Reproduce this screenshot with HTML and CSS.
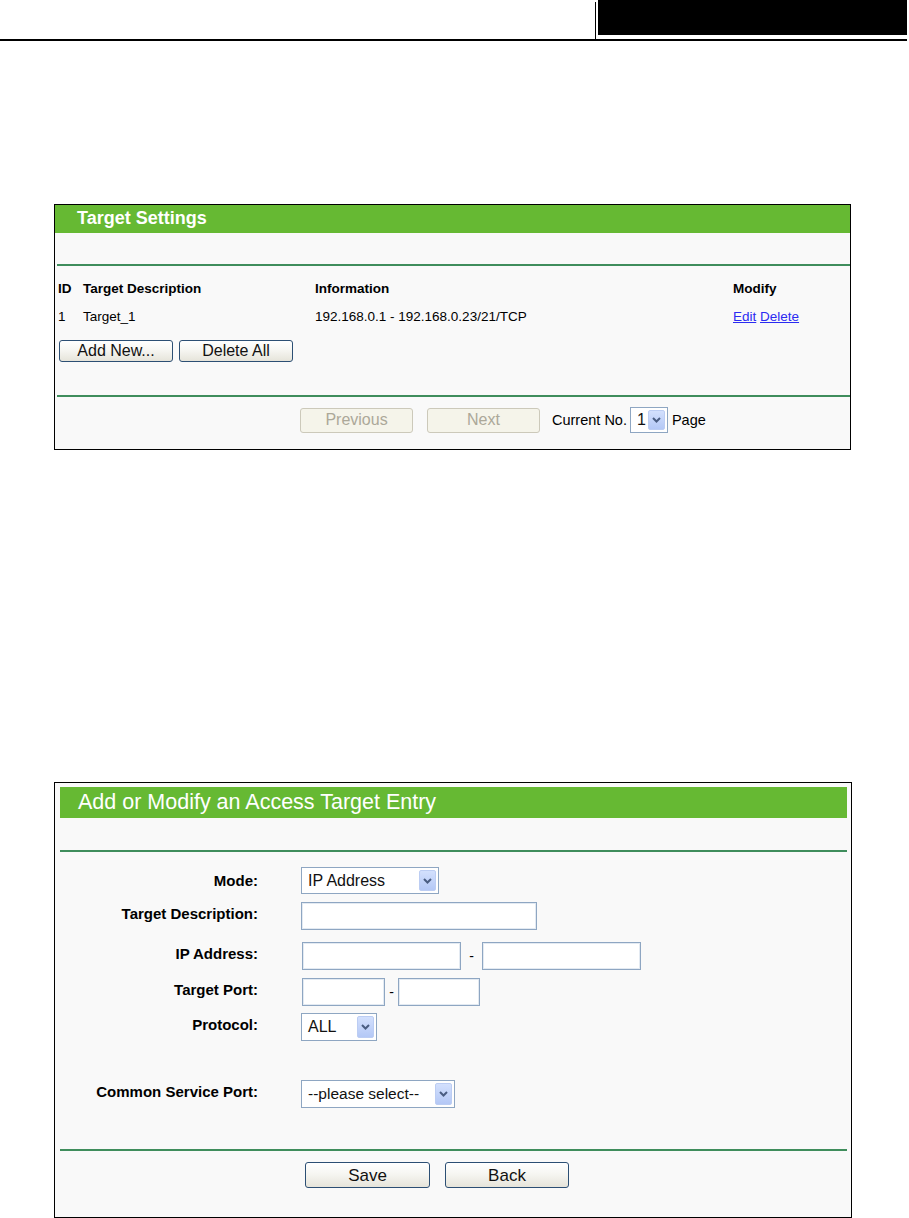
FILE: index.html
```html
<!DOCTYPE html>
<html>
<head>
<meta charset="utf-8">
<title>Access Target</title>
<link rel="stylesheet" href="styles.css">
</head>
<body>
<header class="doc-head">
  <div class="doc-head-fill"></div>
  <div class="doc-head-tab"><div class="doc-head-box"></div></div>
</header>
<div class="doc-rule"></div>

<section class="panel panel-list">
  <div class="panel-title title-bold">Target Settings</div>
  <div class="green-line line-top"></div>
  <div class="list">
    <div class="cell th">ID</div>
    <div class="cell th">Target Description</div>
    <div class="cell th">Information</div>
    <div class="cell th">Modify</div>
    <div class="cell">1</div>
    <div class="cell">Target_1</div>
    <div class="cell">192.168.0.1 - 192.168.0.23/21/TCP</div>
    <div class="cell"><a href="#" class="lnk">Edit</a> <a href="#" class="lnk">Delete</a></div>
  </div>
  <div class="list-actions">
    <button class="btn btn-sm">Add New...</button>
    <button class="btn btn-sm">Delete All</button>
  </div>
  <div class="green-line line-mid"></div>
  <div class="pager">
    <button class="btn btn-off" disabled>Previous</button>
    <button class="btn btn-off" disabled>Next</button>
    <span class="pager-text">Current No.</span>
    <span class="sel sel-page"><span class="sel-val">1</span><span class="sel-arrow"><svg width="9" height="6" viewBox="0 0 9 6"><polyline points="1,1 4.5,4.5 8,1" fill="none" stroke="#4a5d82" stroke-width="2"/></svg></span></span>
    <span class="pager-text">Page</span>
  </div>
</section>

<section class="panel panel-form">
  <div class="panel-title title-form">Add or Modify an Access Target Entry</div>
  <div class="green-line line-form-top"></div>

  <div class="frow r1">
    <label class="flabel">Mode:</label>
    <span class="sel sel-mode"><span class="sel-val">IP Address</span><span class="sel-arrow"><svg width="9" height="6" viewBox="0 0 9 6"><polyline points="1,1 4.5,4.5 8,1" fill="none" stroke="#4a5d82" stroke-width="2"/></svg></span></span>
  </div>
  <div class="frow r2">
    <label class="flabel">Target Description:</label>
    <span class="inp inp-desc"></span>
  </div>
  <div class="frow r3">
    <label class="flabel">IP Address:</label>
    <span class="inp inp-ip inp-first"></span><span class="dash dash-ip">-</span><span class="inp inp-ip"></span>
  </div>
  <div class="frow r4">
    <label class="flabel">Target Port:</label>
    <span class="inp inp-port inp-first"></span><span class="dash dash-port">-</span><span class="inp inp-port2"></span>
  </div>
  <div class="frow r5">
    <label class="flabel">Protocol:</label>
    <span class="sel sel-proto"><span class="sel-val">ALL</span><span class="sel-arrow"><svg width="9" height="6" viewBox="0 0 9 6"><polyline points="1,1 4.5,4.5 8,1" fill="none" stroke="#4a5d82" stroke-width="2"/></svg></span></span>
  </div>
  <div class="frow r6">
    <label class="flabel">Common Service Port:</label>
    <span class="sel sel-csp"><span class="sel-val">--please select--</span><span class="sel-arrow"><svg width="9" height="6" viewBox="0 0 9 6"><polyline points="1,1 4.5,4.5 8,1" fill="none" stroke="#4a5d82" stroke-width="2"/></svg></span></span>
  </div>

  <div class="green-line line-form-bot"></div>
  <div class="form-actions">
    <button class="btn btn-lg">Save</button>
    <button class="btn btn-lg btn-back">Back</button>
  </div>
</section>
</body>
</html>
```

FILE: styles.css
```css
* { box-sizing: border-box; }
html, body { margin: 0; padding: 0; background: #ffffff; }
body {
  width: 909px;
  font-family: "Liberation Sans", Arial, sans-serif;
  color: #000;
}

/* document header */
.doc-head {
  display: flex;
  height: 39px;
}
.doc-head-fill { flex: 1; }
.doc-head-tab {
  width: 312px;
  margin-right: 2px;
  padding-left: 2px;
  border-left: 1px solid #000;
  margin-top: 2px;
}
.doc-head-box {
  background: #000;
  height: 35px;
  margin-top: -2px;
}
.doc-rule {
  height: 2px;
  background: #000;
  margin-right: 2px;
}

/* panels */
.panel {
  margin-left: 54px;
  border: 1px solid #000;
  background: #f9f9f9;
}
.panel-list {
  width: 797px;
  margin-top: 163px;
}
.panel-form {
  width: 798px;
  margin-top: 332px;
  padding: 4px 4px 0 5px;
  height: 436px;
}
.panel-title {
  background: #66b933;
  color: #fff;
}
.title-bold {
  height: 28px;
  font-size: 18px;
  font-weight: bold;
  line-height: 27px;
  padding-left: 22px;
}
.title-form {
  height: 31px;
  font-size: 21.5px;
  line-height: 30px;
  padding-left: 18px;
}
.green-line {
  height: 2px;
  background: #3f8d5c;
}
.line-top { margin: 31px 0 0 2px; }
.line-mid { margin: 33px 0 0 2px; }
.line-form-top { margin-top: 32px; }
.line-form-bot { margin-top: 9px; }

/* list */
.list {
  display: grid;
  grid-template-columns: 25px 232px 418px 1fr;
  grid-auto-rows: 28px;
  align-items: center;
  padding-left: 3px;
  margin-top: 8px;
  font-size: 13.5px;
}
.th { font-weight: bold; }
.lnk { color: #2b2bf2; text-decoration: underline; }

.list-actions {
  display: flex;
  gap: 6px;
  padding-left: 4px;
  margin-top: 10px;
}

/* buttons */
.btn {
  font-family: "Liberation Sans", Arial, sans-serif;
  font-size: 16px;
  color: #111;
  border: 1px solid #2c4f74;
  border-radius: 3px;
  background: linear-gradient(#ffffff 0%, #f6f6f2 45%, #e6e4da 100%);
  padding: 0;
  line-height: 1;
}
.btn-sm { width: 114px; height: 22px; }
.btn-off {
  width: 113px;
  height: 25px;
  color: #aca899;
  border-color: #ccc9ba;
  background: #f5f4ea;
}
.btn-lg { width: 125px; height: 26px; font-size: 17px; }
.btn-back { width: 124px; }

/* pager */
.pager {
  display: flex;
  align-items: center;
  padding-left: 245px;
  margin-top: 10px;
  margin-bottom: 16px;
  height: 26px;
  font-size: 14.5px;
}
.pager .btn-off + .btn-off { margin-left: 14px; }
.pager-text { margin-left: 12px; }
.pager .sel + .pager-text { margin-left: 4px; }
.sel-page { width: 38px; height: 26px; margin-left: 3px; }

/* selects & inputs */
.sel {
  display: inline-flex;
  align-items: center;
  justify-content: space-between;
  background: #fff;
  border: 1px solid #8ea6c2;
  padding: 2px 2px 2px 6px;
  font-size: 16px;
  color: #111;
}
.sel-arrow {
  width: 17px;
  align-self: stretch;
  border-radius: 2px;
  background: linear-gradient(#d3e0fd, #b4c8f6);
  border: 1px solid #bccdf3;
  display: flex;
  align-items: center;
  justify-content: center;
}
.sel-mode { width: 138px; height: 27px; }
.sel-proto { width: 76px; height: 28px; }
.sel-csp { width: 154px; height: 28px; font-size: 15.5px; }

.inp {
  display: inline-block;
  background: #fff;
  border: 1px solid #8ea6c2;
  box-shadow: inset 0 0 0 1px #e3eaf2;
  height: 28px;
}
.inp-first { margin-left: 1px; }
.inp-desc { width: 236px; }
.inp-ip { width: 159px; }
.inp-port { width: 83px; }
.inp-port2 { width: 82px; }
.dash { text-align: center; font-size: 14px; }
.dash-ip { width: 21px; }
.dash-port { width: 13px; }

/* form rows */
.frow {
  display: flex;
  align-items: center;
}
.flabel {
  width: 198px;
  text-align: right;
  font-weight: bold;
  font-size: 15px;
  margin-right: 43px;
  padding-bottom: 6px;
}
.r1 .flabel { padding-bottom: 0; }
.r1 { height: 35px; margin-top: 11px; }
.r2 { height: 36px; }
.r3 { height: 44px; }
.r4 { height: 28px; }
.r5 { height: 42px; }
.r6 { height: 92px; }

.form-actions {
  display: flex;
  gap: 15px;
  padding-left: 245px;
  margin-top: 11px;
}
```
